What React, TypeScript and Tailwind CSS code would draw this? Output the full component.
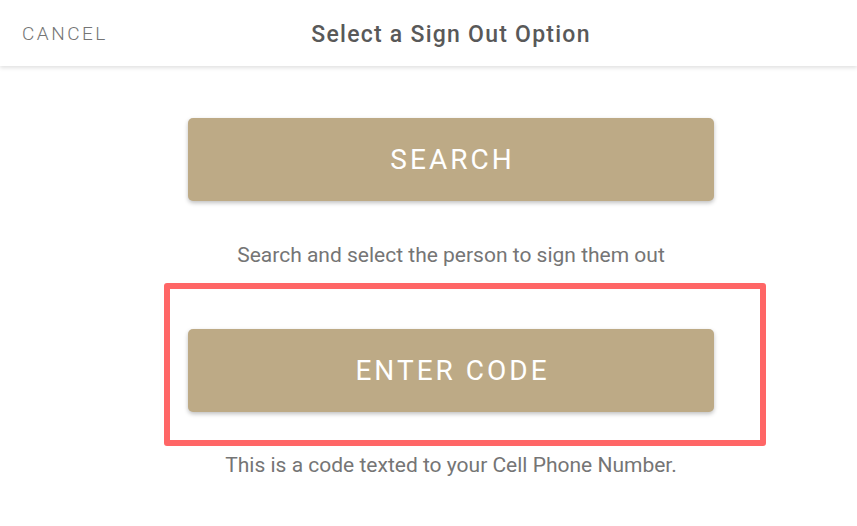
import React from 'react';

const App: React.FC = () => {
  return (
    <div className="w-[857px] h-[526px] bg-white overflow-hidden" style={{ fontFamily: 'Roboto, "Liberation Sans", sans-serif' }}>
      {/* Header */}
      <header className="relative h-[66px] flex items-center justify-center bg-white shadow-[0_2px_4px_rgba(0,0,0,0.12)]">
        <button className="absolute left-[22px] top-[21px] text-[19px] leading-[26px] tracking-[2.5px] text-[#757575] font-light">
          CANCEL
        </button>
        <h1 className="pl-[45px] pt-[4px] text-[23px] leading-[30px] font-medium tracking-[1.25px] text-[#595959]">Select a Sign Out Option</h1>
      </header>

      <main className="flex flex-col items-center pl-[45px]">
        <button className="mt-[52px] w-[526px] h-[83px] rounded-[5px] bg-[#bdaa86] text-white text-[28px] tracking-[3px] pl-[3px] shadow-[0_2px_4px_rgba(0,0,0,0.25)]">
          SEARCH
        </button>
        <p className="mt-[42px] text-[21px] leading-[24px] text-[#757575]">Search and select the person to sign them out</p>

        {/* Highlighted option */}
        <div className="mt-[16px] ml-[28px] w-[602px] h-[163px] border-[6px] border-[#ff6666] rounded-[3px] flex items-start pl-[18px] pt-[40px]">
          <button className="w-[526px] h-[83px] rounded-[5px] bg-[#bdaa86] text-white text-[28px] tracking-[3px] pl-[3px] shadow-[0_2px_4px_rgba(0,0,0,0.25)]">
            ENTER CODE
          </button>
        </div>
        <p className="mt-[7px] text-[21px] leading-[24px] text-[#757575]">This is a code texted to your Cell Phone Number.</p>
      </main>
    </div>
  );
};

export default App;
